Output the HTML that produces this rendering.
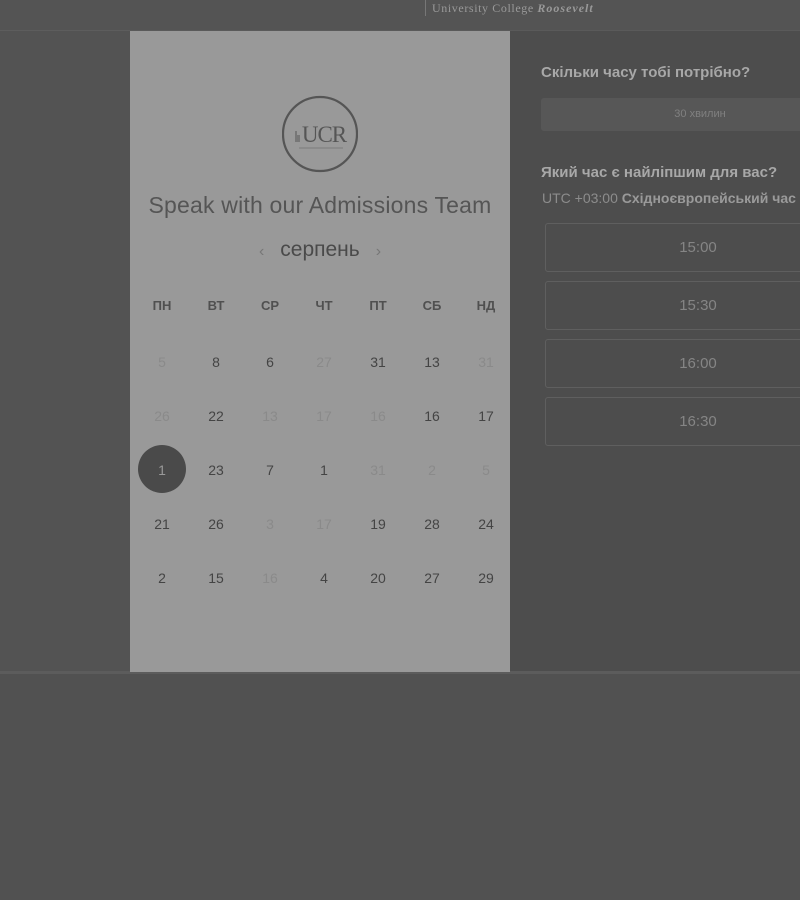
<!DOCTYPE html>
<html><head><meta charset="utf-8">
<style>
*{margin:0;padding:0;box-sizing:border-box}
body{width:800px;height:900px;background:#535353;position:relative;overflow:hidden;font-family:"Liberation Sans",sans-serif}
.top{position:absolute;left:0;top:0;width:800px;height:31px;background:#545454;border-bottom:1px solid #5a5a5a}
.brand{position:absolute;left:425px;top:0;height:16px;border-left:1px solid #777;padding-left:6px;color:#999;font-family:"Liberation Serif",serif;font-size:12px;letter-spacing:.6px;line-height:16px}
.brand i{font-style:italic;font-weight:bold;letter-spacing:1px}
.leftline{position:absolute;left:0;top:30px;width:130px;height:1px;background:#5d5d5d}
.card{position:absolute;left:130px;top:31px;width:380px;height:641px;background:#999}
.right{position:absolute;left:510px;top:31px;width:290px;height:641px;background:#4d4d4d}
.bottomline{position:absolute;left:0;top:671px;width:800px;height:3px;background:#5c5c5c}
.below{position:absolute;left:0;top:674px;width:800px;height:226px;background:#515151}
.logo{position:absolute;left:152px;top:64px}
.title{position:absolute;left:0;width:380px;top:161px;text-align:center;font-size:23px;color:#555;letter-spacing:.2px}
.month{position:absolute;left:0;width:380px;top:207px;text-align:center;font-size:21px;color:#4a4a4a}
.month span{color:#777;font-size:16px;margin:0 16px}
.c{position:absolute;width:54px;text-align:center;font-size:14px;color:#444}
.h{font-weight:bold;font-size:13px;color:#505050}
.f{color:#8a8a8a}
.sel{position:absolute;left:8px;top:414px;width:48px;height:48px;border-radius:50%;background:#4a4a4a}
.q{position:absolute;left:541px;font-weight:bold;font-size:15px;color:#a8a8a8}
.dur{position:absolute;left:541px;top:98px;width:318px;height:33px;background:#575757;border-radius:3px;color:#808080;font-size:11px;text-align:center;line-height:33px}
.tz{position:absolute;left:542px;top:190px;font-size:14px;color:#8c8c8c;white-space:nowrap}
.tz b{color:#9a9a9a}
.slot{position:absolute;left:545px;width:306px;height:49px;border:1px solid #5f5f5f;border-radius:3px;color:#858585;font-size:15px;text-align:center;line-height:47px}
</style></head><body>
<div class="top"><div class="brand">University College <i>Roosevelt</i></div></div>
<div class="leftline"></div>
<div class="right"></div>
<div class="bottomline"></div>
<div class="below"></div>
<div class="q" style="top:64px">Скільки часу тобі потрібно?</div>
<div class="dur">30 хвилин</div>
<div class="q" style="top:164px">Який час є найліпшим для вас?</div>
<div class="tz">UTC +03:00 <b>Східноєвропейський час</b> ▾</div>
<div class="slot" style="top:223px">15:00</div>
<div class="slot" style="top:281px">15:30</div>
<div class="slot" style="top:339px">16:00</div>
<div class="slot" style="top:397px">16:30</div>
<div class="card">
<svg class="logo" width="76" height="78" viewBox="0 0 76 78"><circle cx="38" cy="39" r="37" fill="none" stroke="#555" stroke-width="2.2"/><text x="42" y="47" text-anchor="middle" font-family="Liberation Serif,serif" font-size="23" fill="#555" letter-spacing="-1">UCR</text><rect x="13" y="36" width="2" height="11" fill="#777"/><rect x="15" y="40" width="3" height="7" fill="#777"/><line x1="17" y1="53" x2="61" y2="53" stroke="#7a7a7a" stroke-width="1"/></svg>
<div class="title">Speak with our Admissions Team</div>
<div class="month"><span>‹</span>серпень<span>›</span></div>
<div class="sel"></div>
<div id="g"></div>
</div>
<script>
var g=document.getElementById('g'),h=['ПН','ВТ','СР','ЧТ','ПТ','СБ','НД'],s='';
var rows=[['5f','8','6','27f','31','13','31f'],['26f','22','13f','17f','16f','16','17'],['1s','23','7','1','31f','2f','5f'],['21','26','3f','17f','19','28','24'],['2','15','16f','4','20','27','29']];
for(var i=0;i<7;i++)s+='<div class="c h" style="left:'+(5+i*54)+'px;top:267px">'+h[i]+'</div>';
rows.forEach(function(r,ri){r.forEach(function(v,ci){var cls='c',t=v.replace(/[fs]/,''),st='';if(v.indexOf('f')>0)cls+=' f';if(v.indexOf('s')>0)st='color:#999;';s+='<div class="'+cls+'" style="'+st+'left:'+(5+ci*54)+'px;top:'+(323+ri*54)+'px">'+t+'</div>';});});
g.innerHTML=s;
</script>
</body></html>
